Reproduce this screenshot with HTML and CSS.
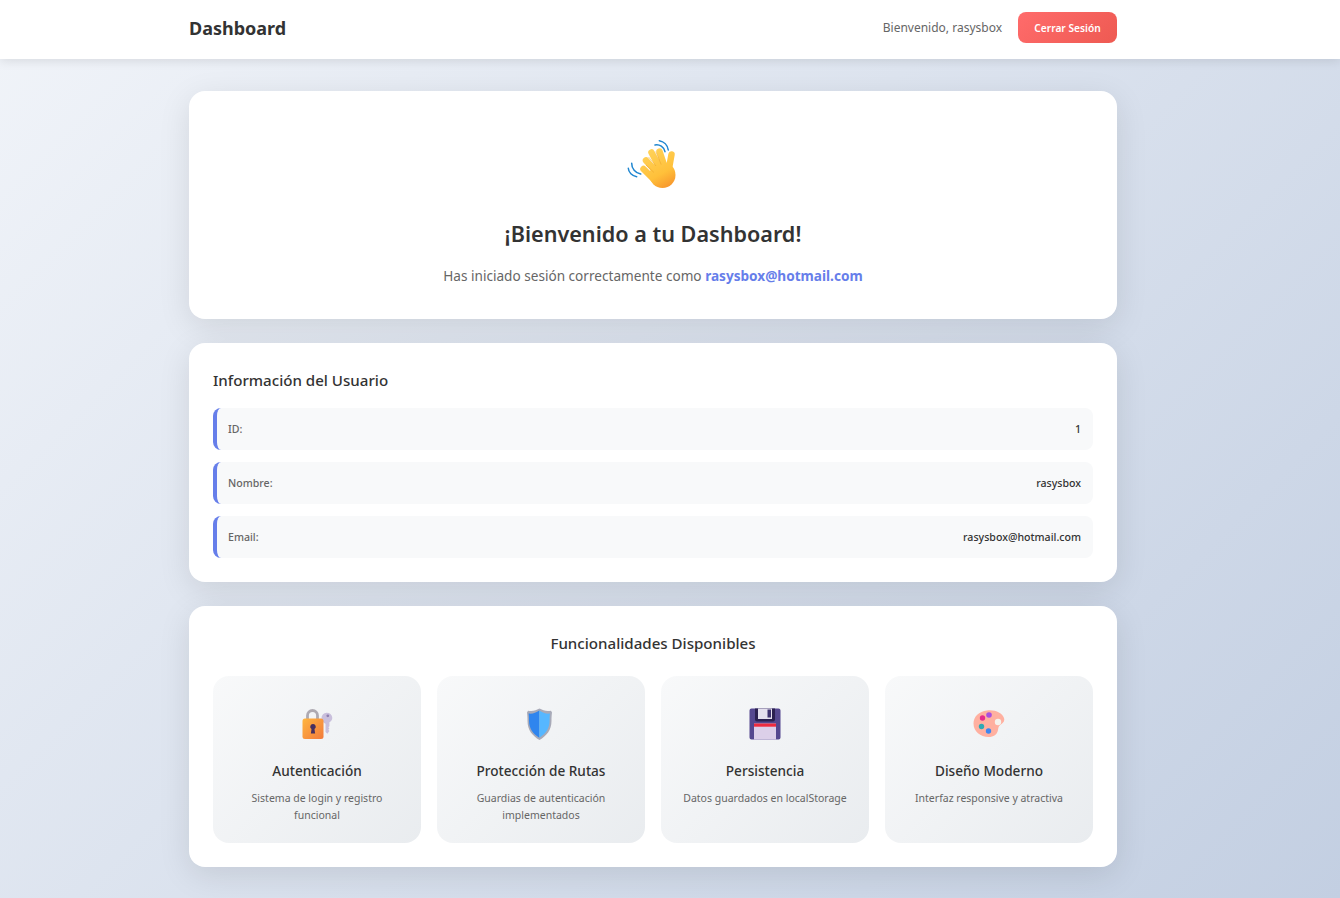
FILE: index.html
```html
<!DOCTYPE html>
<html lang="es">
<head>
<meta charset="utf-8">
<title>Dashboard</title>
<link rel="stylesheet" href="styles.css">
</head>
<body>
<header class="nav">
  <div class="nav-inner">
    <h1 class="brand">Dashboard</h1>
    <div class="nav-user">
      <span class="greet">Bienvenido, rasysbox</span>
      <button class="logout">Cerrar Sesión</button>
    </div>
  </div>
</header>
<main class="content">
  <section class="card hero">
    <svg class="wave" viewBox="0 0 52 52" aria-hidden="true">
      <defs>
        <linearGradient id="hand" gradientUnits="userSpaceOnUse" x1="18" y1="10" x2="40" y2="50"><stop offset="0" stop-color="#ffd45c"/><stop offset="0.65" stop-color="#ffc03a"/><stop offset="1" stop-color="#f7952c"/></linearGradient>
      </defs>
      <g fill="none" stroke="#1f86d0" stroke-width="1.500" stroke-linecap="round">
        <path d="M28 6c4.500-1 9 2 10 6.700"/><path d="M32.300 1.700c4.500 .8 8.300 4.300 9 9.300"/>
        <path d="M1.300 29.300c.3 4.200 3.700 7.700 8.400 8.400"/><path d="M4.700 24.300c-.2 5 3.700 9.700 9 10.700"/>
      </g>
      <circle cx="35.500" cy="36" r="13" fill="url(#hand)"/>
      <g fill="none" stroke="url(#hand)" stroke-width="6.500" stroke-linecap="round">
        <path d="M16.500 30l11 11"/><path d="M19 21.500l11 12"/><path d="M24.500 13.500l8 15"/><path d="M32.500 12.500l5 15"/><path d="M44.500 15.500l-2.500 14"/>
      </g>
      <g fill="none" stroke="#e99a24" stroke-width=".800" opacity=".55">
        <path d="M19 26l8 7.500"/><path d="M21.500 18l7.500 9"/><path d="M28.700 12.500l5.500 13"/>
      </g>
    </svg>
    <h2 class="hero-title">¡Bienvenido a tu Dashboard!</h2>
    <p class="hero-text">Has iniciado sesión correctamente como <strong class="hero-mail">rasysbox@hotmail.com</strong></p>
  </section>

  <section class="card">
    <h3 class="section-title">Información del Usuario</h3>
    <div class="info-list">
      <div class="info-row"><span class="info-label">ID:</span><span class="info-value">1</span></div>
      <div class="info-row"><span class="info-label">Nombre:</span><span class="info-value">rasysbox</span></div>
      <div class="info-row"><span class="info-label">Email:</span><span class="info-value">rasysbox@hotmail.com</span></div>
    </div>
  </section>

  <section class="card">
    <h3 class="section-title centered">Funcionalidades Disponibles</h3>
    <div class="features">
      <article class="feature">
        <svg class="f-icon" viewBox="0 0 32 32" aria-hidden="true">
          <defs><linearGradient id="lock" x1="0" y1="0" x2="1" y2="1"><stop offset="0" stop-color="#ffb640"/><stop offset="1" stop-color="#f27a3c"/></linearGradient></defs>
          <path fill="none" stroke="#aeaab2" stroke-width="2.800" d="M6.500 11V7.500a5 5 0 0 1 10 0V11"/>
          <path fill="#c9bfdc" d="M20.500 10.500a5.300 5.300 0 0 1 10.800-.7c0 2.200-1.200 3.800-2.900 4.500v4l-1 1 1 1.300-1 1.200 1 1.200-2 2.700-1.900-1.700v-8.200c-1.800-.8-4-2.700-4-5.300z"/>
          <circle cx="26.800" cy="7.800" r="1.400" fill="#8f80b0"/>
          <rect x="1.500" y="10.500" width="21" height="20.500" rx="2.500" fill="url(#lock)"/>
          <path fill="#47305f" d="M12 16a2.700 2.700 0 0 1 1.500 5l.6 4.500h-4.200l.6-4.500A2.700 2.700 0 0 1 12 16z"/>
        </svg>
        <h4 class="f-title">Autenticación</h4>
        <p class="f-text">Sistema de login y registro funcional</p>
      </article>
      <article class="feature">
        <svg class="f-icon" viewBox="0 0 32 32" aria-hidden="true">
          <path fill="#a8aab8" d="M14.500 0.500l4 1.800c2.500 1 5 1 7.500 .4l1 1.800c-.3 2-.5 5-.5 8.500 0 9-5 15-12 19-7-4-12-10-12-19 0-3.500-.2-6.500-.5-8.500l1-1.800c2.500 .6 5 .6 7.500-.4z"/>
          <path fill="#2f85ee" d="M14.300 2.500v27.300c-5.800-3.500-10.300-8.800-10.300-17 0-3-.1-5.300-.4-7.300 3.800 .5 7.300-.5 10.700-3z"/>
          <path fill="#56b7ff" d="M14.300 2.500c3.400 2.500 6.900 3.500 10.700 3-.3 2-.4 4.300-.4 7.300 0 8.200-4.500 13.500-10.300 17z"/>
        </svg>
        <h4 class="f-title">Protección de Rutas</h4>
        <p class="f-text">Guardias de autenticación implementados</p>
      </article>
      <article class="feature">
        <svg class="f-icon" viewBox="0 0 32 32" aria-hidden="true">
          <path fill="#55478f" d="M2.500 .5h27a2 2 0 0 1 2 2v27a2 2 0 0 1-2 2h-27a2 2 0 0 1-2-2v-27a2 2 0 0 1 2-2z"/>
          <path fill="#2b2050" d="M6 .5h20v11a2 2 0 0 1-2 2H8a2 2 0 0 1-2-2z"/>
          <rect x="9" y=".5" width="14" height="10.500" fill="#e4dfee"/>
          <rect x="18.500" y="1.500" width="3.500" height="8" fill="#3f3270"/>
          <rect x="5" y="15.500" width="22" height="16" fill="#dccfe9"/>
          <rect x="5" y="15.500" width="22" height="3.200" fill="#ee2b3f"/>
        </svg>
        <h4 class="f-title">Persistencia</h4>
        <p class="f-text">Datos guardados en localStorage</p>
      </article>
      <article class="feature">
        <svg class="f-icon" viewBox="0 0 32 32" aria-hidden="true">
          <path fill="#ffb0a0" d="M14 2.500c8.500-1 15 2.500 17 7.500 1 2.500-.5 4.500-2.500 6-3 2-3 3.500-3.500 6-.7 4.500-4.500 7-9.500 7C7.500 29 .5 23.500 .5 15.500.5 8.500 6 3.500 14 2.500z"/>
          <circle cx="25" cy="14" r="3.200" fill="#f5f3ee"/>
          <circle cx="9.500" cy="10" r="2.700" fill="#e62c8c"/>
          <circle cx="16" cy="7" r="2.800" fill="#a84fe0"/>
          <circle cx="8.500" cy="18.500" r="2.700" fill="#2fa8b5"/>
          <circle cx="15.500" cy="23" r="2.700" fill="#3f86ee"/>
        </svg>
        <h4 class="f-title">Diseño Moderno</h4>
        <p class="f-text">Interfaz responsive y atractiva</p>
      </article>
    </div>
  </section>
</main>
</body>
</html>
```
FILE: styles.css
```css
* { box-sizing: border-box; margin: 0; padding: 0; }
html, body { height: 100%; }
body {
  font-family: "Noto Sans", "Open Sans", sans-serif;
  color: #333;
  background: linear-gradient(135deg, #f1f4f9 0%, #c3cfe2 100%);
  min-height: 898px;
  overflow: hidden;
}
.nav {
  height: 59px;
  padding-bottom: 4px;
  background: #fff;
  box-shadow: 0 2px 10px rgba(0, 0, 0, 0.1);
}
.nav-inner {
  width: 928px;
  height: 100%;
  margin-left: 189px;
  display: flex;
  align-items: center;
  justify-content: space-between;
}
.brand { font-size: 18px; font-weight: 700; color: #333; line-height: 26px; }
.nav-user { display: flex; align-items: center; gap: 16px; }
.greet { font-size: 12px; color: #666; }
.logout {
  width: 99px;
  height: 31px;
  border: 0;
  border-radius: 8px;
  font-family: inherit;
  font-size: 10.200px;
  font-weight: 600;
  color: #fff;
  background: linear-gradient(135deg, #ff6b6b, #ee5a52);
}
.content {
  width: 928px;
  margin: 32px 0 0 189px;
  display: flex;
  flex-direction: column;
  gap: 24px;
}
.card {
  background: #fff;
  border-radius: 16px;
  padding: 24px;
  box-shadow: 0 8px 32px rgba(0, 0, 0, 0.1);
}
.hero {
  height: 228px;
  padding-top: 48px;
  display: flex;
  flex-direction: column;
  align-items: center;
  text-align: center;
}
.wave { display: block; width: 52px; height: 52px; }
.hero-title { margin-top: 28px; font-size: 21.600px; font-weight: 600; line-height: 30px; color: #333; }
.hero-text { margin-top: 18px; font-size: 13.600px; line-height: 18px; color: #666; }
.hero-mail { color: #667eea; font-weight: 700; }
.section-title { font-size: 15.100px; font-weight: 500; line-height: 26px; color: #333; }
.centered { text-align: center; }
.info-list { margin-top: 15px; display: flex; flex-direction: column; gap: 12px; }
.info-row {
  height: 42px;
  padding: 0 12px 0 11px;
  display: flex;
  align-items: center;
  justify-content: space-between;
  background: #f8f9fa;
  border-left: 4px solid #667eea;
  border-radius: 8px;
  font-size: 10.600px;
}
.info-label { color: #666; font-weight: 500; }
.info-value { color: #333; font-weight: 500; }
.features { margin-top: 20px; display: grid; grid-template-columns: repeat(4, 1fr); gap: 16px; }
.feature {
  height: 167px;
  padding: 32px 16px 0;
  text-align: center;
  border-radius: 16px;
  background: linear-gradient(135deg, #f8f9fa, #e9ecef);
}
.f-icon { display: block; width: 32px; height: 32px; margin: 0 auto; }
.f-title { margin-top: 22px; font-size: 13.600px; font-weight: 500; line-height: 18px; color: #333; }
.f-text { margin-top: 10px; font-size: 10.500px; line-height: 17px; color: #666; }
```
